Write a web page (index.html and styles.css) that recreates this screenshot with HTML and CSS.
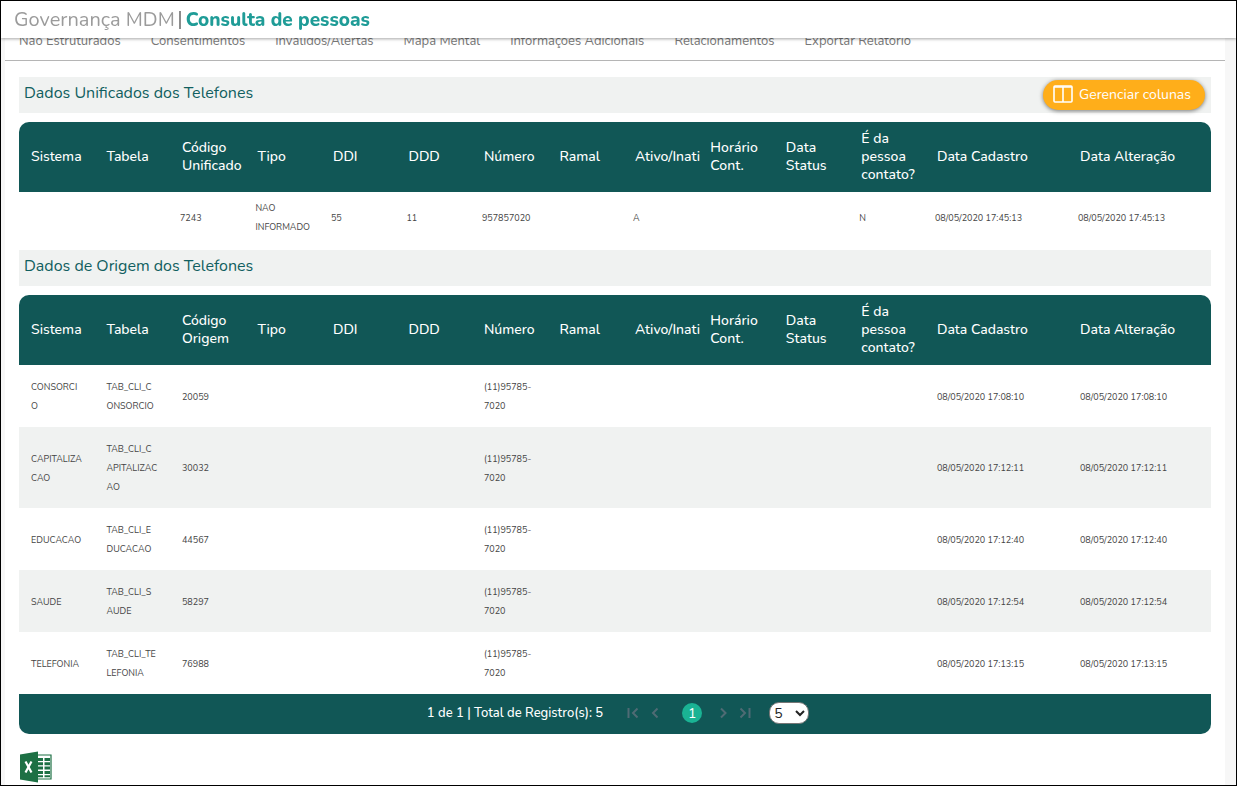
FILE: index.html
```html
<!DOCTYPE html>
<html lang="pt-BR">
<head>
<meta charset="utf-8">
<title>Governança MDM | Consulta de pessoas</title>
<link rel="stylesheet" href="styles.css">
</head>
<body>
<div class="frame">
<header class="topbar">
  <span class="brand">Governança MDM</span><span class="bar"></span><h1 class="page-title">Consulta de pessoas</h1>
</header>
<main class="panel">
  <nav class="tabs">
    <a href="#">Não Estruturados</a><a href="#">Consentimentos</a><a href="#">Inválidos/Alertas</a><a href="#">Mapa Mental</a><a href="#">Informações Adicionais</a><a href="#">Relacionamentos</a><a href="#">Exportar Relatório</a>
  </nav>
  <div class="content">
    <div class="section-bar">
      <h2>Dados Unificados dos Telefones</h2>
      <button class="manage" type="button">
        <svg width="20" height="18" viewBox="0 0 20 18" fill="none" stroke="#fff" stroke-width="1.6"><rect x="1" y="1" width="18" height="16" rx="1"/><path d="M1 2h18M10 2v15"/></svg>
        Gerenciar colunas
      </button>
    </div>
    <table class="grid unified">
      <colgroup><col span="12"><col class="date" span="2"></colgroup>
      <thead><tr><th>Sistema</th><th>Tabela</th><th>Código Unificado</th><th>Tipo</th><th>DDI</th><th>DDD</th><th>Número</th><th>Ramal</th><th>Ativo/Inati</th><th>Horário Cont.</th><th>Data Status</th><th>É da pessoa contato?</th><th>Data Cadastro</th><th>Data Alteração</th></tr></thead>
      <tbody>
        <tr><td></td><td></td><td>7243</td><td>NAO<br>INFORMADO</td><td>55</td><td>11</td><td>957857020</td><td></td><td>A</td><td></td><td></td><td>N</td><td>08/05/2020 17:45:13</td><td>08/05/2020 17:45:13</td></tr>
      </tbody>
    </table>
    <div class="section-bar">
      <h2>Dados de Origem dos Telefones</h2>
    </div>
    <table class="grid origin">
      <colgroup><col span="12"><col class="date" span="2"></colgroup>
      <thead><tr><th>Sistema</th><th>Tabela</th><th>Código Origem</th><th>Tipo</th><th>DDI</th><th>DDD</th><th>Número</th><th>Ramal</th><th>Ativo/Inati</th><th>Horário Cont.</th><th>Data Status</th><th>É da pessoa contato?</th><th>Data Cadastro</th><th>Data Alteração</th></tr></thead>
      <tbody>
        <tr><td>CONSORCI<br>O</td><td>TAB_CLI_C<br>ONSORCIO</td><td>20059</td><td></td><td></td><td></td><td>(11)95785-<br>7020</td><td></td><td></td><td></td><td></td><td></td><td>08/05/2020 17:08:10</td><td>08/05/2020 17:08:10</td></tr>
        <tr><td>CAPITALIZA<br>CAO</td><td>TAB_CLI_C<br>APITALIZAC<br>AO</td><td>30032</td><td></td><td></td><td></td><td>(11)95785-<br>7020</td><td></td><td></td><td></td><td></td><td></td><td>08/05/2020 17:12:11</td><td>08/05/2020 17:12:11</td></tr>
        <tr><td>EDUCACAO</td><td>TAB_CLI_E<br>DUCACAO</td><td>44567</td><td></td><td></td><td></td><td>(11)95785-<br>7020</td><td></td><td></td><td></td><td></td><td></td><td>08/05/2020 17:12:40</td><td>08/05/2020 17:12:40</td></tr>
        <tr><td>SAUDE</td><td>TAB_CLI_S<br>AUDE</td><td>58297</td><td></td><td></td><td></td><td>(11)95785-<br>7020</td><td></td><td></td><td></td><td></td><td></td><td>08/05/2020 17:12:54</td><td>08/05/2020 17:12:54</td></tr>
        <tr><td>TELEFONIA</td><td>TAB_CLI_TE<br>LEFONIA</td><td>76988</td><td></td><td></td><td></td><td>(11)95785-<br>7020</td><td></td><td></td><td></td><td></td><td></td><td>08/05/2020 17:13:15</td><td>08/05/2020 17:13:15</td></tr>
      </tbody>
    </table>
    <div class="pager">
      <span class="summary">1 de 1 | Total de Registro(s): 5</span>
      <div class="pages">
        <button type="button" aria-label="Primeira página" disabled><svg width="12" height="12" viewBox="0 0 12 12"><path d="M1.500 1v10M10.500 1.500L6 6l4.500 4.500"/></svg></button>
        <button type="button" aria-label="Página anterior" disabled><svg width="12" height="12" viewBox="0 0 12 12"><path d="M8.500 1.500L4 6l4.500 4.500"/></svg></button>
        <button type="button" class="current">1</button>
        <button type="button" aria-label="Próxima página" disabled><svg width="12" height="12" viewBox="0 0 12 12"><path d="M4 1.500L8.500 6 4 10.500"/></svg></button>
        <button type="button" aria-label="Última página" disabled><svg width="12" height="12" viewBox="0 0 12 12"><path d="M10.500 1v10M1.500 1.500L6 6l-4.500 4.500"/></svg></button>
      </div>
      <select class="size" aria-label="Registros por página"><option>5</option><option>10</option><option>20</option></select>
    </div>
    <button class="excel" type="button" aria-label="Exportar para Excel">
      <svg width="34" height="32" viewBox="0 0 34 32">
        <path d="M18 4h14v24H18z" fill="#fff" stroke="#1d7044" stroke-width="1.200"/>
        <path d="M19 7h5v3h-5zM25.500 7H31v3h-5.500zM19 11.300h5v3h-5zM25.500 11.300H31v3h-5.500zM19 15.600h5v3h-5zM25.500 15.600H31v3h-5.500zM19 19.900h5v3h-5zM25.500 19.900H31v3h-5.500zM19 24.200h5v2h-5zM25.500 24.200H31v2h-5.500z" fill="#1d7044"/>
        <path d="M1 3.500L19 .5v31L1 28.500z" fill="#1d7044"/>
        <path d="M6.500 10.500l6 11M12.500 10.500l-6 11" stroke="#fff" stroke-width="2.200" fill="none"/>
      </svg>
    </button>
  </div>
</main>
</div>
</body>
</html>
```
FILE: styles.css
```css
* { box-sizing: border-box; }

body {
  margin: 0;
  font-family: Nunito, Lato, "Open Sans", sans-serif;
  font-size: 14px;
  background: #f7f7f7;
}

button, select { font-family: inherit; }

.frame {
  height: 100vh;
  border: 1px solid #000;
  overflow: hidden;
  padding: 0 11px 0 4px;
}

.topbar {
  position: fixed;
  z-index: 2;
  top: 1px;
  left: 1px;
  right: 1px;
  height: 37px;
  padding-left: 13px;
  display: flex;
  align-items: center;
  background: #fff;
  box-shadow: 0 1px 3px rgba(0, 0, 0, .35);
  font-size: 20px;
}

.brand { color: #9b9b9b; }
.bar { width: 2px; height: 18px; margin: 0 5px 0 4px; background: #8c8c8c; }
.page-title {
  margin: 0;
  font-size: 19px;
  font-weight: 800;
  color: #1f9c97;
}

.panel { min-height: 100%; background: #fff; }

.tabs {
  display: flex;
  gap: 30px;
  padding: 32px 14px 10px;
  border-bottom: 1px solid #b5b5b5;
}
.tabs a {
  color: #777;
  font-size: 13px;
  line-height: 17px;
  text-decoration: none;
  white-space: nowrap;
}

.content { padding: 16px 14px 0; }

.section-bar {
  display: flex;
  justify-content: space-between;
  height: 36px;
  padding: 0 6px 0 5px;
  margin-bottom: 9px;
  background: #f0f2f1;
}
.section-bar h2 {
  margin: 0;
  font-size: 16px;
  font-weight: 400;
  line-height: 32px;
  color: #115f60;
}

.manage {
  display: flex;
  align-items: center;
  gap: 6px;
  height: 30px;
  margin-top: 3px;
  padding: 0 14px 2px 10px;
  border: 0;
  border-radius: 15px;
  background: #ffae1a;
  color: #fff;
  font-size: 14px;
  box-shadow: 0 1px 4px rgba(0, 0, 0, .5);
}

.grid {
  width: 100%;
  table-layout: fixed;
  border-collapse: separate;
  border-spacing: 0;
}
.grid .date { width: 12%; }
.grid th {
  height: 70px;
  padding: 0 0 0 12px;
  background: #115756;
  color: #fff;
  font-size: 14px;
  font-weight: 500;
  line-height: 18px;
  text-align: left;
}
.grid th:first-child { border-top-left-radius: 10px; }
.grid th:last-child { border-top-right-radius: 10px; }
.grid td {
  padding: 13px 0 11px 12px;
  color: #444;
  font-size: 9px;
  line-height: 19px;
}
.unified td { padding: 7px 0 13px 10px; }
.origin tbody tr:nth-child(even) { background: #f0f2f1; }

.pager {
  display: flex;
  align-items: center;
  justify-content: center;
  height: 40px;
  padding: 0 0 2px 6px;
  border-radius: 0 0 10px 10px;
  background: #115756;
  color: #fff;
}
.summary { font-size: 13px; font-weight: 500; }
.pages {
  display: flex;
  align-items: center;
  margin: 0 18px 0 24px;
  gap: 10px;
}
.pages button {
  display: flex;
  padding: 0;
  border: 0;
  background: none;
}
.pages path { fill: none; stroke: #4f6b74; stroke-width: 2; }
.pages .current {
  align-items: center;
  justify-content: center;
  width: 20px;
  height: 20px;
  margin: 0 5px 0 11px;
  border-radius: 50%;
  background: #1ab394;
  color: #fff;
  font-size: 14px;
}
.size {
  width: 40px;
  height: 22px;
  border: 1px solid #767676;
  border-radius: 10px;
  background: #fff;
  color: #222;
  font-size: 14px;
}

.excel {
  display: block;
  margin-top: 17px;
  padding: 0;
  border: 0;
  background: none;
}
```
